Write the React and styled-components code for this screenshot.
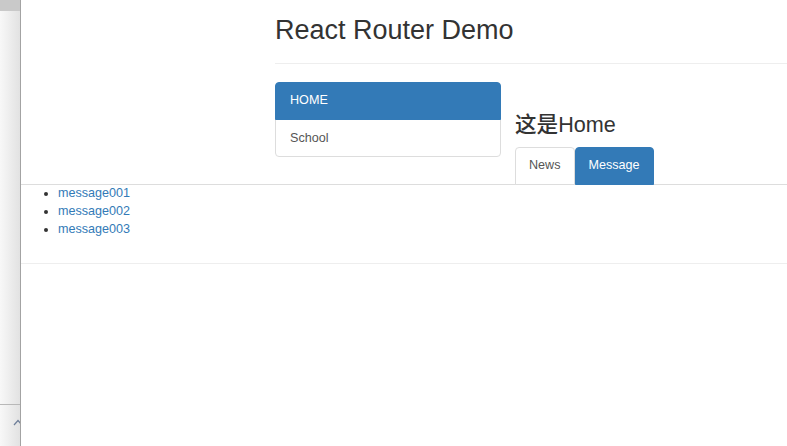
import React from "react";
import styled, { createGlobalStyle } from "styled-components";

const GlobalStyle = createGlobalStyle`
  html, body {
    margin: 0;
    padding: 0;
  }
  body {
    font-family: "Liberation Sans", Arial, "Noto Sans CJK SC", sans-serif;
    font-size: 12.6px;
    line-height: 18px;
    color: #333;
    background: #fff;
  }
  * {
    box-sizing: border-box;
  }
`;

const messages = [
    { id: "001", title: "message001" },
    { id: "002", title: "message002" },
    { id: "003", title: "message003" },
];

function App() {
    return (
        <>
            <GlobalStyle />
            <Page>
                <SideStrip>
                    <StripTop />
                    <StripSpacer />
                    <StripFoot>
                        <svg width="10" height="7" viewBox="0 0 10 7">
                            <polyline points="1,6 5,1.5 9,6" fill="none" stroke="#6f7f99" strokeWidth="1.2" />
                        </svg>
                    </StripFoot>
                </SideStrip>

                <Main>
                    <Header>
                        <Title>React Router Demo</Title>
                    </Header>

                    <Body>
                        <SideNav>
                            <NavItem $active href="#home">HOME</NavItem>
                            <NavItem href="#school">School</NavItem>
                        </SideNav>

                        <Content>
                            <Heading>这是Home</Heading>
                            <Tabs>
                                <Tab href="#news">News</Tab>
                                <Tab $active href="#message">Message</Tab>
                            </Tabs>
                        </Content>
                    </Body>

                    <MessageList>
                        {messages.map((m) => (
                            <li key={m.id}>
                                <MessageLink href={"#" + m.id}>{m.title}</MessageLink>
                            </li>
                        ))}
                    </MessageList>
                    <Divider />
                </Main>
            </Page>
        </>
    );
}

const Page = styled.div`
    display: flex;
    height: 100vh;
    overflow: hidden;
`
const SideStrip = styled.div`
    width: 21px;
    flex-shrink: 0;
    display: flex;
    flex-direction: column;
    overflow: hidden;
    border-right: 1px solid #a3a3a3;
    background: linear-gradient(to right, #f8f8f8, #e2e2e2);
`
const StripTop = styled.div`
    height: 11px;
    background: #c9c9c9;
`
const StripSpacer = styled.div`
    flex: 1;
`
const StripFoot = styled.div`
    height: 42px;
    border-top: 1px solid #b8b8b8;
    padding: 14px 0 0 13px;

    svg {
        display: block;
    }
`
const Main = styled.div`
    flex: 1;
    min-width: 0;
    overflow: hidden;
`
const Header = styled.div`
    margin-left: 254px;
    padding: 15px 0 18px;
    border-bottom: 1px solid #eee;
`
const Title = styled.h2`
    margin: 0;
    font-size: 27px;
    line-height: 30px;
    font-weight: 500;
    color: #333;
`
const Body = styled.div`
    display: flex;
    align-items: flex-start;
    gap: 14px;
    padding: 18px 0 0 254px;
    border-bottom: 1px solid #ddd;
`
const SideNav = styled.div`
    width: 226px;
    display: flex;
    flex-direction: column;
`
const NavItem = styled.a`
    display: block;
    padding: 8px 14px 10px;
    margin-bottom: -1px;
    line-height: 18px;
    text-decoration: none;
    border: 1px solid ${(p) => (p.$active ? "#337ab7" : "#ddd")};
    background: ${(p) => (p.$active ? "#337ab7" : "#fff")};
    color: ${(p) => (p.$active ? "#fff" : "#555")};
    position: relative;
    z-index: ${(p) => (p.$active ? 2 : 1)};

    &:first-child {
        border-radius: 4px 4px 0 0;
    }
    &:last-child {
        border-radius: 0 0 4px 4px;
        margin-bottom: 0;
        padding: 9px 14px;
    }
`
const Content = styled.div`
    display: flex;
    flex-direction: column;
`
const Heading = styled.h3`
    margin: 31px 0 10px;
    font-size: 21.6px;
    line-height: 24px;
    font-weight: 500;
    color: #333;
`
const Tabs = styled.div`
    display: flex;
    margin-bottom: -1px;
`
const Tab = styled.a`
    display: block;
    padding: 8px 13px 10px;
    line-height: 18px;
    text-decoration: none;
    border: 1px solid ${(p) => (p.$active ? "#337ab7" : "#ddd")};
    border-radius: 4px 4px 0 0;
    background: ${(p) => (p.$active ? "#337ab7" : "#fff")};
    color: ${(p) => (p.$active ? "#fff" : "#555")};
`
const MessageList = styled.ul`
    margin: -1px 0 25px;
    padding-left: 37px;

    li {
        line-height: 18px;
    }
`
const MessageLink = styled.a`
    color: #337ab7;
    text-decoration: none;
`
const Divider = styled.div`
    border-top: 1px solid #eee;
`

export default App;
